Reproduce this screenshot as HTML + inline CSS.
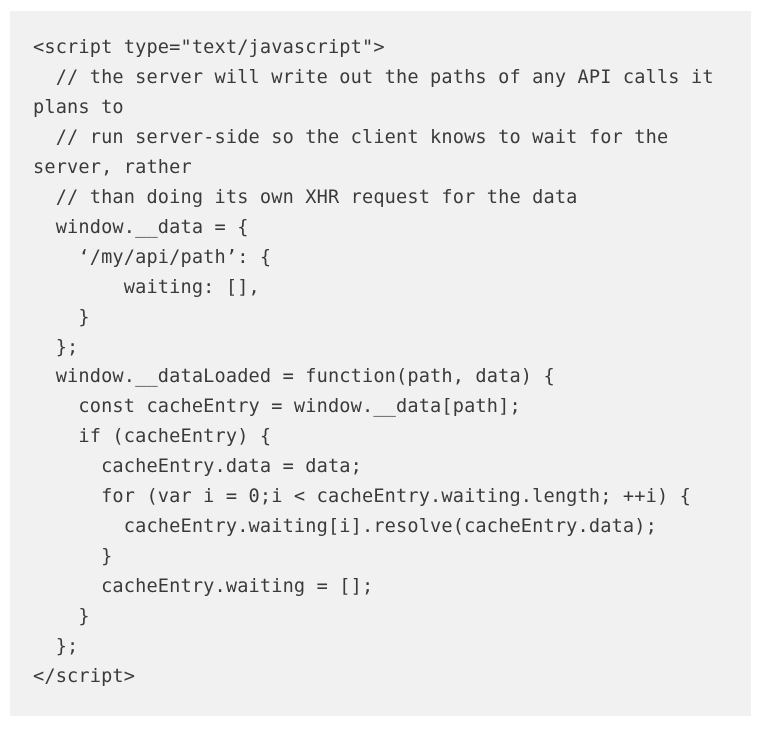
<!DOCTYPE html>
<html><head><style>
html,body{margin:0;padding:0;background:#fff;width:760px;height:733px;overflow:hidden}
.box{position:absolute;left:10px;top:11px;width:741px;height:705px;background:#f1f1f1}
pre{position:absolute;left:33px;top:33px;margin:0;font-family:"DejaVu Sans Mono","Liberation Mono",monospace;font-size:18.6px;line-height:29.95px;color:#3a3a3a;letter-spacing:0.15px}
</style></head><body>
<div class="box"></div>
<pre>&lt;script type="text/javascript"&gt;
  // the server will write out the paths of any API calls it
plans to
  // run server-side so the client knows to wait for the
server, rather
  // than doing its own XHR request for the data
  window.__data = {
    ‘/my/api/path’: {
        waiting: [],
    }
  };
  window.__dataLoaded = function(path, data) {
    const cacheEntry = window.__data[path];
    if (cacheEntry) {
      cacheEntry.data = data;
      for (var i = 0;i &lt; cacheEntry.waiting.length; ++i) {
        cacheEntry.waiting[i].resolve(cacheEntry.data);
      }
      cacheEntry.waiting = [];
    }
  };
&lt;/script&gt;</pre>
</body></html>
